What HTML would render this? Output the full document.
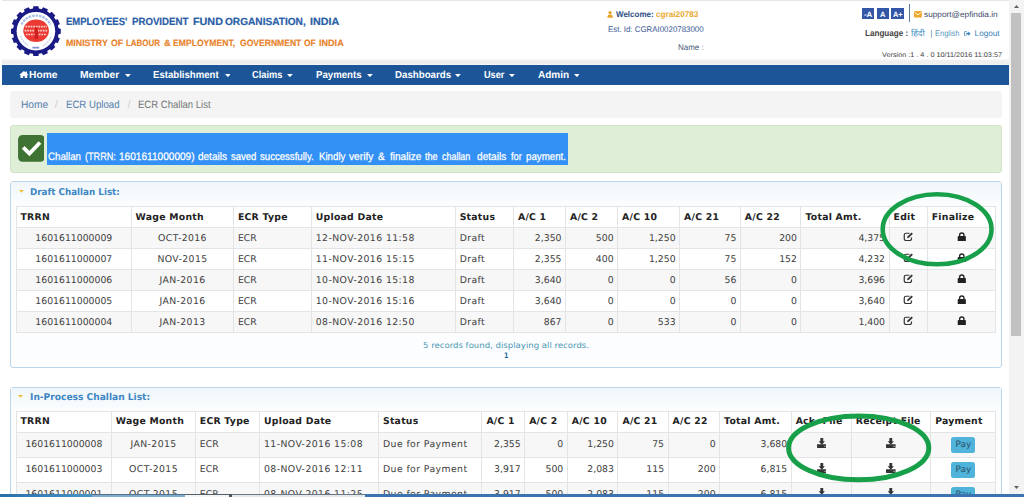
<!DOCTYPE html>
<html lang="en">
<head>
<meta charset="utf-8">
<title>ECR Challan List</title>
<style>
*{box-sizing:border-box;margin:0;padding:0}
html,body{width:1024px;height:497px;overflow:hidden;background:#fff}
body{position:relative;text-rendering:geometricPrecision;font-family:"Liberation Sans",sans-serif;font-size:11px;color:#333}
.abs{position:absolute}
.f{position:absolute;white-space:nowrap;transform-origin:0 50%;display:block;text-rendering:geometricPrecision}
.panel{left:10px;width:992px;border:1px solid #bcd5e8;border-radius:3px;background:#fcfdfe}
.phead{position:absolute;left:0;top:0;right:0;height:22px;background:linear-gradient(#eff6fb,#fbfdfe)}
.tri{width:0;height:0;border-left:2.400px solid transparent;border-right:2.400px solid transparent;border-top:2.600px solid #f0c040}
table.t{position:absolute;border-collapse:collapse;table-layout:fixed;font-family:"DejaVu Sans","Liberation Sans",sans-serif;font-size:9.3px;color:#404040;background:#fff}
table.t th,table.t td{border:1px solid #e4e4e4;padding:0 3.500px 0 4px;white-space:nowrap;overflow:hidden;vertical-align:middle;line-height:12px}
table.d th,table.d td{padding-top:2px}
table.t th{text-align:left;font-weight:bold;color:#222;letter-spacing:0.25px}
table.t td.c{text-align:center}
table.t td.r{text-align:right}
table.t td.l{text-align:left}
table.t tr.o td{background:#f7f7f7}
table.t tr.e td{background:#fff}
.ic{display:inline-block;vertical-align:middle;position:relative;top:-1px}
table.d .ic{top:-2px}
.pay{display:inline-block;background:#4fb3da;color:#2a4f66;border-radius:2.500px;font-size:8.800px;line-height:16px;width:24px;height:16px;text-align:center;vertical-align:middle;position:relative;top:-0.500px}
</style>
</head>
<body>
<div class="abs" style="left:2px;top:0;width:1008px;height:1px;background:#e6e6e6"></div>
<div class="abs" style="left:2px;top:59px;width:1008px;height:6px;background:linear-gradient(#fcfcfc,#eeeeee 30%,#eeeeee 80%,#f8f8f8)"></div>
<svg class="abs" style="left:0;top:0" width="70" height="62" viewBox="0 0 70 62">
  <path d="M58.51 28.25 L60.77 28.65 L60.77 33.75 L58.51 34.15 L57.92 37.13 L59.85 38.36 L57.90 43.07 L55.66 42.57 L53.97 45.10 L55.29 46.98 L51.68 50.59 L49.80 49.27 L47.27 50.96 L47.77 53.20 L43.06 55.15 L41.83 53.22 L38.85 53.81 L38.45 56.07 L33.35 56.07 L32.95 53.81 L29.97 53.22 L28.74 55.15 L24.03 53.20 L24.53 50.96 L22.00 49.27 L20.12 50.59 L16.51 46.98 L17.83 45.10 L16.14 42.57 L13.90 43.07 L11.95 38.36 L13.88 37.13 L13.29 34.15 L11.03 33.75 L11.03 28.65 L13.29 28.25 L13.88 25.27 L11.95 24.04 L13.90 19.33 L16.14 19.83 L17.83 17.30 L16.51 15.42 L20.12 11.81 L22.00 13.13 L24.53 11.44 L24.03 9.20 L28.74 7.25 L29.97 9.18 L32.95 8.59 L33.35 6.33 L38.45 6.33 L38.85 8.59 L41.83 9.18 L43.06 7.25 L47.77 9.20 L47.27 11.44 L49.80 13.13 L51.68 11.81 L55.29 15.42 L53.97 17.30 L55.66 19.83 L57.90 19.33 L59.85 24.04 L57.92 25.27Z" fill="#1a1a86"/>
  <circle cx="35.9" cy="31.2" r="19.3" fill="#fff"/>
  <path d="M21.4 24.5A16.2 16.2 0 0 1 50.4 24.5" fill="none" stroke="#a9bfe8" stroke-width="2.2" stroke-dasharray="2.6 0.9"/>
  <path d="M20.6 36A16.2 16.2 0 0 0 29 45.800M43 45.800A16.2 16.2 0 0 0 51.2 36" fill="none" stroke="#c5d3f0" stroke-width="1.6" stroke-dasharray="1.6 1"/>
  <ellipse cx="36.1" cy="30.8" rx="12.8" ry="11.3" fill="#ea3a33"/>
  <path d="M25.5 26.700h21.500M24.6 30.600h23M25.8 34.500h21" fill="none" stroke="#fbd3cf" stroke-width="1.700" stroke-dasharray="1.7 0.9"/>
  <path d="M34.600 29.500h3.300v9.500h-3.300z" fill="#cf1f1c"/>
  <circle cx="36.2" cy="28.600" r="1.300" fill="#cf1f1c"/>
  <rect x="32.4" y="46.800" width="6.800" height="1.700" fill="#7f8fd0"/>
</svg>
<span class="f" style="left:65.80px;top:13.00px;font:bold 10.4px/20px 'Liberation Sans',sans-serif;color:#2a5ea7;transform:scaleX(0.9115);-webkit-text-stroke:0.2px #2a5ea7;">EMPLOYEES'</span>
<span class="f" style="left:131.70px;top:13.00px;font:bold 10.4px/20px 'Liberation Sans',sans-serif;color:#2a5ea7;transform:scaleX(0.9287);-webkit-text-stroke:0.2px #2a5ea7;">PROVIDENT</span>
<span class="f" style="left:192.70px;top:13.00px;font:bold 10.4px/20px 'Liberation Sans',sans-serif;color:#2a5ea7;transform:scaleX(1.0361);-webkit-text-stroke:0.2px #2a5ea7;">FUND</span>
<span class="f" style="left:225.00px;top:13.00px;font:bold 10.4px/20px 'Liberation Sans',sans-serif;color:#2a5ea7;transform:scaleX(0.9730);-webkit-text-stroke:0.2px #2a5ea7;">ORGANISATION,</span>
<span class="f" style="left:309.50px;top:13.00px;font:bold 10.4px/20px 'Liberation Sans',sans-serif;color:#2a5ea7;transform:scaleX(1.0319);-webkit-text-stroke:0.2px #2a5ea7;">INDIA</span>
<span class="f" style="left:65.90px;top:33.00px;font:bold 9.2px/20px 'Liberation Sans',sans-serif;color:#e8822a;transform:scaleX(0.9595);-webkit-text-stroke:0.15px #e8822a;">MINISTRY</span>
<span class="f" style="left:111.20px;top:33.00px;font:bold 9.2px/20px 'Liberation Sans',sans-serif;color:#e8822a;transform:scaleX(0.9479);-webkit-text-stroke:0.15px #e8822a;">OF</span>
<span class="f" style="left:126.20px;top:33.00px;font:bold 9.2px/20px 'Liberation Sans',sans-serif;color:#e8822a;transform:scaleX(0.8649);-webkit-text-stroke:0.15px #e8822a;">LABOUR</span>
<span class="f" style="left:163.50px;top:33.00px;font:bold 9.2px/20px 'Liberation Sans',sans-serif;color:#e8822a;transform:scaleX(1.0089);-webkit-text-stroke:0.15px #e8822a;">&amp;</span>
<span class="f" style="left:173.30px;top:33.00px;font:bold 9.2px/20px 'Liberation Sans',sans-serif;color:#e8822a;transform:scaleX(0.9373);-webkit-text-stroke:0.15px #e8822a;">EMPLOYMENT,</span>
<span class="f" style="left:239.50px;top:33.00px;font:bold 9.2px/20px 'Liberation Sans',sans-serif;color:#e8822a;transform:scaleX(0.9308);-webkit-text-stroke:0.15px #e8822a;">GOVERNMENT</span>
<span class="f" style="left:304.40px;top:33.00px;font:bold 9.2px/20px 'Liberation Sans',sans-serif;color:#e8822a;transform:scaleX(0.9165);-webkit-text-stroke:0.15px #e8822a;">OF</span>
<span class="f" style="left:318.60px;top:33.00px;font:bold 9.2px/20px 'Liberation Sans',sans-serif;color:#e8822a;transform:scaleX(0.9874);-webkit-text-stroke:0.15px #e8822a;">INDIA</span>
<svg class="abs" style="left:607.3px;top:11px" width="6.2" height="6.8" viewBox="0 0 14 16"><circle cx="7" cy="4" r="3.8" fill="#e9a326"/><path d="M0.500 16c0-6 2.500-8 6.500-8s6.500 2 6.500 8z" fill="#e9a326"/></svg>
<span class="f" style="left:616.10px;top:4.00px;font:bold 8.3px/20px 'Liberation Sans',sans-serif;color:#2b4d85;transform:scaleX(0.9629);">Welcome:</span>
<span class="f" style="left:656.40px;top:4.00px;font:bold 8.3px/20px 'Liberation Sans',sans-serif;color:#e9a92b;transform:scaleX(0.9882);">cgrai20783</span>
<span class="f" style="left:608.00px;top:20.00px;font:normal 8.2px/20px 'Liberation Sans',sans-serif;color:#3c5a96;transform:scaleX(0.9634);">Est. Id: CGRAI0020783000</span>
<span class="f" style="left:677.90px;top:38.00px;font:normal 8.2px/20px 'Liberation Sans',sans-serif;color:#4a5878;transform:scaleX(0.9738);">Name :</span>
<div class="abs" style="left:862.3px;top:8.4px;width:12.1px;height:11px;background:#3456a6"></div>
<div class="abs" style="left:876.6px;top:8.4px;width:12.0px;height:11px;background:#3456a6"></div>
<div class="abs" style="left:891.0px;top:8.4px;width:12.7px;height:11px;background:#3456a6"></div>
<span class="f" style="left:864.30px;top:5.00px;font:bold 7.6px/20px 'Liberation Sans',sans-serif;color:#fff;transform:scaleX(1.0355);">-A</span>
<span class="f" style="left:880.00px;top:5.00px;font:bold 7.6px/20px 'Liberation Sans',sans-serif;color:#fff;transform:scaleX(0.9846);">A</span>
<span class="f" style="left:892.60px;top:5.00px;font:bold 7.6px/20px 'Liberation Sans',sans-serif;color:#fff;transform:scaleX(0.9676);">A+</span>
<div class="abs" style="left:909px;top:4.300px;width:1px;height:18px;background:#60789c"></div>
<svg class="abs" style="left:913.7px;top:11.400px" width="7.9" height="6.5" viewBox="0 0 18 15"><rect x="0" y="0" width="18" height="15" rx="2" fill="#f0a830"/><path d="M1.500 3l7.500 6 7.500-6" fill="none" stroke="#fff" stroke-width="2"/></svg>
<span class="f" style="left:924.30px;top:5.00px;font:normal 8px/20px 'Liberation Sans',sans-serif;color:#3a4a6a;transform:scaleX(1.0339);">support@epfindia.in</span>
<span class="f" style="left:864.80px;top:23.00px;font:bold 8.8px/20px 'Liberation Sans',sans-serif;color:#444;transform:scaleX(0.9207);">Language :</span>
<span class="f" style="left:911.30px;top:24.00px;font:normal 8.2px/20px 'Liberation Sans',sans-serif;color:#3a8ac0;transform:scaleX(1.0589);">हिंदी</span>
<span class="f" style="left:930.20px;top:24.00px;font:normal 8.2px/20px 'Liberation Sans',sans-serif;color:#5a8ab0;">|</span>
<span class="f" style="left:934.50px;top:24.00px;font:normal 8.2px/20px 'Liberation Sans',sans-serif;color:#5a9ac0;transform:scaleX(0.9122);">English</span>
<svg class="abs" style="left:964.3px;top:30.600px" width="7" height="5.400" viewBox="0 0 16 13"><path d="M6 1H2.500A1.500 1.500 0 0 0 1 2.500v8A1.500 1.500 0 0 0 2.500 12H6" fill="none" stroke="#3a80b8" stroke-width="2"/><path d="M5 4.500h5V1.500l5.500 5-5.500 5v-3H5z" fill="#3a80b8"/></svg>
<span class="f" style="left:974.60px;top:24.00px;font:normal 8.2px/20px 'Liberation Sans',sans-serif;color:#3a80b8;">Logout</span>
<span class="f" style="left:881.50px;top:46.00px;font:normal 6.8px/20px 'Liberation Sans',sans-serif;color:#444;transform:scaleX(1.0679);">Version :1 . 4 . 0 10/11/2016 11:03:57</span>
<div class="abs" style="left:2px;top:65px;width:1007px;height:20px;background:#1c5699"></div>
<svg class="abs" style="left:18.900px;top:70.600px" width="9.8" height="7.5" viewBox="0 0 20 16"><path d="M10 0L0 8.500h2.700V16h5.300v-5h4v5h5.300V8.500H20L16.500 5.500V1h-2.800v2.100z" fill="#fff"/></svg>
<span class="f" style="left:29.10px;top:66.00px;font:bold 10.2px/20px 'Liberation Sans',sans-serif;color:#fff;">Home</span>
<span class="f" style="left:80.10px;top:66.00px;font:bold 10.2px/20px 'Liberation Sans',sans-serif;color:#fff;transform:scaleX(1.0057);">Member</span>
<svg class="abs" style="left:125.0px;top:74.200px" width="5.800" height="3.200" viewBox="0 0 58 32"><path d="M0 0h58L29 32z" fill="#fff"/></svg>
<span class="f" style="left:153.10px;top:66.00px;font:bold 10.2px/20px 'Liberation Sans',sans-serif;color:#fff;transform:scaleX(0.9420);">Establishment</span>
<svg class="abs" style="left:224.5px;top:74.200px" width="5.800" height="3.200" viewBox="0 0 58 32"><path d="M0 0h58L29 32z" fill="#fff"/></svg>
<span class="f" style="left:251.90px;top:66.00px;font:bold 10.2px/20px 'Liberation Sans',sans-serif;color:#fff;transform:scaleX(0.9096);">Claims</span>
<svg class="abs" style="left:287.4px;top:74.200px" width="5.800" height="3.200" viewBox="0 0 58 32"><path d="M0 0h58L29 32z" fill="#fff"/></svg>
<span class="f" style="left:316.10px;top:66.00px;font:bold 10.2px/20px 'Liberation Sans',sans-serif;color:#fff;transform:scaleX(0.9472);">Payments</span>
<svg class="abs" style="left:366.8px;top:74.200px" width="5.800" height="3.200" viewBox="0 0 58 32"><path d="M0 0h58L29 32z" fill="#fff"/></svg>
<span class="f" style="left:394.90px;top:66.00px;font:bold 10.2px/20px 'Liberation Sans',sans-serif;color:#fff;transform:scaleX(0.9526);">Dashboards</span>
<svg class="abs" style="left:455.4px;top:74.200px" width="5.800" height="3.200" viewBox="0 0 58 32"><path d="M0 0h58L29 32z" fill="#fff"/></svg>
<span class="f" style="left:484.10px;top:66.00px;font:bold 10.2px/20px 'Liberation Sans',sans-serif;color:#fff;transform:scaleX(0.9004);">User</span>
<svg class="abs" style="left:509.2px;top:74.200px" width="5.800" height="3.200" viewBox="0 0 58 32"><path d="M0 0h58L29 32z" fill="#fff"/></svg>
<span class="f" style="left:537.90px;top:66.00px;font:bold 10.2px/20px 'Liberation Sans',sans-serif;color:#fff;transform:scaleX(0.9810);">Admin</span>
<svg class="abs" style="left:573.5px;top:74.200px" width="5.800" height="3.200" viewBox="0 0 58 32"><path d="M0 0h58L29 32z" fill="#fff"/></svg>
<div class="abs" style="left:10px;top:91px;width:992px;height:27px;background:#f4f4f4;border-radius:3px"></div>
<span class="f" style="left:21.10px;top:95.00px;font:normal 10.6px/20px 'Liberation Sans',sans-serif;color:#5580ad;transform:scaleX(0.9623);">Home</span>
<span class="f" style="left:54.80px;top:95.00px;font:normal 10.6px/20px 'Liberation Sans',sans-serif;color:#ccc;">/</span>
<span class="f" style="left:66.40px;top:95.00px;font:normal 10.6px/20px 'Liberation Sans',sans-serif;color:#5580ad;transform:scaleX(0.9085);">ECR Upload</span>
<span class="f" style="left:127.50px;top:95.00px;font:normal 10.6px/20px 'Liberation Sans',sans-serif;color:#ccc;">/</span>
<span class="f" style="left:137.80px;top:95.00px;font:normal 10.6px/20px 'Liberation Sans',sans-serif;color:#777;transform:scaleX(0.8999);">ECR Challan List</span>
<div class="abs" style="left:9.500px;top:124.800px;width:992.500px;height:48.600px;background:#dfeed7;border:1px solid #d3e4c6;border-radius:3px"></div>
<div class="abs" style="left:46.900px;top:132.600px;width:521.500px;height:32.300px;background:#3390f5"></div>
<svg class="abs" style="left:17.600px;top:135.200px" width="26.9" height="26.8" viewBox="0 0 27 27"><rect x="0" y="0" width="27" height="27" rx="4.500" fill="#3f7334"/><path d="M6.500 13.800l5 5L20.800 9" fill="none" stroke="#fff" stroke-width="3.800" stroke-linecap="square"/></svg>
<span class="f" style="left:47.90px;top:147.00px;font:normal 10.8px/20px 'Liberation Sans',sans-serif;color:#fff;transform:scaleX(0.9010);-webkit-text-stroke:0.25px #fff;">Challan</span>
<span class="f" style="left:84.80px;top:147.00px;font:normal 10.8px/20px 'Liberation Sans',sans-serif;color:#fff;transform:scaleX(0.8444);-webkit-text-stroke:0.25px #fff;">(TRRN:</span>
<span class="f" style="left:119.20px;top:147.00px;font:normal 10.8px/20px 'Liberation Sans',sans-serif;color:#fff;transform:scaleX(0.9350);-webkit-text-stroke:0.25px #fff;">1601611000009)</span>
<span class="f" style="left:198.20px;top:147.00px;font:normal 10.8px/20px 'Liberation Sans',sans-serif;color:#fff;transform:scaleX(0.9257);-webkit-text-stroke:0.25px #fff;">details</span>
<span class="f" style="left:231.00px;top:147.00px;font:normal 10.8px/20px 'Liberation Sans',sans-serif;color:#fff;transform:scaleX(0.8816);-webkit-text-stroke:0.25px #fff;">saved</span>
<span class="f" style="left:260.30px;top:147.00px;font:normal 10.8px/20px 'Liberation Sans',sans-serif;color:#fff;transform:scaleX(0.8890);-webkit-text-stroke:0.25px #fff;">successfully.</span>
<span class="f" style="left:318.90px;top:147.00px;font:normal 10.8px/20px 'Liberation Sans',sans-serif;color:#fff;transform:scaleX(0.8973);-webkit-text-stroke:0.25px #fff;">Kindly</span>
<span class="f" style="left:349.20px;top:147.00px;font:normal 10.8px/20px 'Liberation Sans',sans-serif;color:#fff;transform:scaleX(0.9459);-webkit-text-stroke:0.25px #fff;">verify</span>
<span class="f" style="left:377.70px;top:147.00px;font:normal 10.8px/20px 'Liberation Sans',sans-serif;color:#fff;transform:scaleX(0.9440);-webkit-text-stroke:0.25px #fff;">&amp;</span>
<span class="f" style="left:389.60px;top:147.00px;font:normal 10.8px/20px 'Liberation Sans',sans-serif;color:#fff;transform:scaleX(0.9313);-webkit-text-stroke:0.25px #fff;">finalize</span>
<span class="f" style="left:424.80px;top:147.00px;font:normal 10.8px/20px 'Liberation Sans',sans-serif;color:#fff;transform:scaleX(0.8458);-webkit-text-stroke:0.25px #fff;">the</span>
<span class="f" style="left:442.40px;top:147.00px;font:normal 10.8px/20px 'Liberation Sans',sans-serif;color:#fff;transform:scaleX(0.8270);-webkit-text-stroke:0.25px #fff;">challan</span>
<span class="f" style="left:476.60px;top:147.00px;font:normal 10.8px/20px 'Liberation Sans',sans-serif;color:#fff;transform:scaleX(0.9385);-webkit-text-stroke:0.25px #fff;">details</span>
<span class="f" style="left:510.70px;top:147.00px;font:normal 10.8px/20px 'Liberation Sans',sans-serif;color:#fff;transform:scaleX(0.8565);-webkit-text-stroke:0.25px #fff;">for</span>
<span class="f" style="left:526.40px;top:147.00px;font:normal 10.8px/20px 'Liberation Sans',sans-serif;color:#fff;transform:scaleX(0.9005);-webkit-text-stroke:0.25px #fff;">payment.</span>
<div class="abs panel" style="top:181px;height:187px"><div class="phead"></div></div>
<svg class="abs" style="left:18.600px;top:189.500px" width="5" height="3" viewBox="0 0 5 3"><path d="M0 0h5L2.500 2.800z" fill="#f0bf3a"/></svg>
<span class="f" style="left:29.80px;top:183.00px;font:bold 9.4px/20px 'DejaVu Sans','Liberation Sans',sans-serif;color:#3f86c4;transform:scaleX(0.9340);">Draft Challan List:</span>
<table class="t d" style="left:15.5px;top:206px;width:979.8px">
<colgroup><col style="width:115.1px"><col style="width:102.3px"><col style="width:77.9px"><col style="width:143.9px"><col style="width:58.3px"><col style="width:52.0px"><col style="width:52.1px"><col style="width:62.0px"><col style="width:60.8px"><col style="width:60.6px"><col style="width:88.1px"><col style="width:38.2px"><col style="width:68.5px"></colgroup>
<tr style="height:21px"><th>TRRN</th><th>Wage Month</th><th>ECR Type</th><th>Upload Date</th><th>Status</th><th>A/C 1</th><th>A/C 2</th><th>A/C 10</th><th>A/C 21</th><th>A/C 22</th><th>Total Amt.</th><th>Edit</th><th>Finalize</th></tr>
<tr class="o" style="height:21px"><td class="c">1601611000009</td><td class="c" style="letter-spacing:0.4px">OCT-2016</td><td class="l">ECR</td><td class="l" style="letter-spacing:0.42px">12-NOV-2016 11:58</td><td class="l" style="letter-spacing:0.4px">Draft</td><td class="r">2,350</td><td class="r">500</td><td class="r">1,250</td><td class="r">75</td><td class="r">200</td><td class="r">4,375</td><td class="c"><svg class="ic" width="10" height="9.500" viewBox="0 0 20 19"><path d="M13 2.500H6a3.500 3.500 0 0 0-3.500 3.500v7.500A3.500 3.500 0 0 0 6 17h7.500a3.500 3.500 0 0 0 3.500-3.500V11" fill="none" stroke="#333" stroke-width="2.400"/><path d="M8.200 12.500l0.800-3.700 8-8 2.800 2.800-8 8z" fill="#333"/></svg></td><td class="c"><svg class="ic" width="9.600" height="9.400" viewBox="0 0 20 19.500"><path d="M5.500 9V6.500a4.500 4.500 0 0 1 9 0V9" fill="none" stroke="#222" stroke-width="2.800"/><rect x="1.500" y="8.500" width="17" height="11" rx="1.500" fill="#222"/></svg></td></tr>
<tr class="e" style="height:21px"><td class="c">1601611000007</td><td class="c" style="letter-spacing:0.4px">NOV-2015</td><td class="l">ECR</td><td class="l" style="letter-spacing:0.42px">11-NOV-2016 15:15</td><td class="l" style="letter-spacing:0.4px">Draft</td><td class="r">2,355</td><td class="r">400</td><td class="r">1,250</td><td class="r">75</td><td class="r">152</td><td class="r">4,232</td><td class="c"><svg class="ic" width="10" height="9.500" viewBox="0 0 20 19"><path d="M13 2.500H6a3.500 3.500 0 0 0-3.500 3.500v7.500A3.500 3.500 0 0 0 6 17h7.500a3.500 3.500 0 0 0 3.500-3.500V11" fill="none" stroke="#333" stroke-width="2.400"/><path d="M8.200 12.500l0.800-3.700 8-8 2.800 2.800-8 8z" fill="#333"/></svg></td><td class="c"><svg class="ic" width="9.600" height="9.400" viewBox="0 0 20 19.500"><path d="M5.500 9V6.500a4.500 4.500 0 0 1 9 0V9" fill="none" stroke="#222" stroke-width="2.800"/><rect x="1.500" y="8.500" width="17" height="11" rx="1.500" fill="#222"/></svg></td></tr>
<tr class="o" style="height:21px"><td class="c">1601611000006</td><td class="c" style="letter-spacing:0.4px">JAN-2016</td><td class="l">ECR</td><td class="l" style="letter-spacing:0.42px">10-NOV-2016 15:18</td><td class="l" style="letter-spacing:0.4px">Draft</td><td class="r">3,640</td><td class="r">0</td><td class="r">0</td><td class="r">56</td><td class="r">0</td><td class="r">3,696</td><td class="c"><svg class="ic" width="10" height="9.500" viewBox="0 0 20 19"><path d="M13 2.500H6a3.500 3.500 0 0 0-3.500 3.500v7.500A3.500 3.500 0 0 0 6 17h7.500a3.500 3.500 0 0 0 3.500-3.500V11" fill="none" stroke="#333" stroke-width="2.400"/><path d="M8.200 12.500l0.800-3.700 8-8 2.800 2.800-8 8z" fill="#333"/></svg></td><td class="c"><svg class="ic" width="9.600" height="9.400" viewBox="0 0 20 19.500"><path d="M5.500 9V6.500a4.500 4.500 0 0 1 9 0V9" fill="none" stroke="#222" stroke-width="2.800"/><rect x="1.500" y="8.500" width="17" height="11" rx="1.500" fill="#222"/></svg></td></tr>
<tr class="e" style="height:21px"><td class="c">1601611000005</td><td class="c" style="letter-spacing:0.4px">JAN-2016</td><td class="l">ECR</td><td class="l" style="letter-spacing:0.42px">10-NOV-2016 15:16</td><td class="l" style="letter-spacing:0.4px">Draft</td><td class="r">3,640</td><td class="r">0</td><td class="r">0</td><td class="r">0</td><td class="r">0</td><td class="r">3,640</td><td class="c"><svg class="ic" width="10" height="9.500" viewBox="0 0 20 19"><path d="M13 2.500H6a3.500 3.500 0 0 0-3.500 3.500v7.500A3.500 3.500 0 0 0 6 17h7.500a3.500 3.500 0 0 0 3.500-3.500V11" fill="none" stroke="#333" stroke-width="2.400"/><path d="M8.200 12.500l0.800-3.700 8-8 2.800 2.800-8 8z" fill="#333"/></svg></td><td class="c"><svg class="ic" width="9.600" height="9.400" viewBox="0 0 20 19.500"><path d="M5.500 9V6.500a4.500 4.500 0 0 1 9 0V9" fill="none" stroke="#222" stroke-width="2.800"/><rect x="1.500" y="8.500" width="17" height="11" rx="1.500" fill="#222"/></svg></td></tr>
<tr class="o" style="height:21px"><td class="c">1601611000004</td><td class="c" style="letter-spacing:0.4px">JAN-2013</td><td class="l">ECR</td><td class="l" style="letter-spacing:0.42px">08-NOV-2016 12:50</td><td class="l" style="letter-spacing:0.4px">Draft</td><td class="r">867</td><td class="r">0</td><td class="r">533</td><td class="r">0</td><td class="r">0</td><td class="r">1,400</td><td class="c"><svg class="ic" width="10" height="9.500" viewBox="0 0 20 19"><path d="M13 2.500H6a3.500 3.500 0 0 0-3.500 3.500v7.500A3.500 3.500 0 0 0 6 17h7.500a3.500 3.500 0 0 0 3.500-3.500V11" fill="none" stroke="#333" stroke-width="2.400"/><path d="M8.200 12.500l0.800-3.700 8-8 2.800 2.800-8 8z" fill="#333"/></svg></td><td class="c"><svg class="ic" width="9.600" height="9.400" viewBox="0 0 20 19.500"><path d="M5.500 9V6.500a4.500 4.500 0 0 1 9 0V9" fill="none" stroke="#222" stroke-width="2.800"/><rect x="1.500" y="8.500" width="17" height="11" rx="1.500" fill="#222"/></svg></td></tr>
</table>
<span class="f" style="left:422.60px;top:336.00px;font:normal 8px/20px 'DejaVu Sans','Liberation Sans',sans-serif;color:#4a98b5;transform:scaleX(1.0683);">5 records found, displaying all records.</span>
<span class="f" style="left:503.80px;top:346.00px;font:bold 7.6px/20px 'DejaVu Sans','Liberation Sans',sans-serif;color:#2a6a9a;transform:scaleX(0.8307);">1</span>
<div class="abs panel" style="top:387px;height:130px"><div class="phead"></div></div>
<svg class="abs" style="left:18.200px;top:395.200px" width="5" height="3" viewBox="0 0 5 3"><path d="M0 0h5L2.500 2.800z" fill="#f0bf3a"/></svg>
<span class="f" style="left:30.10px;top:388.00px;font:bold 9.4px/20px 'DejaVu Sans','Liberation Sans',sans-serif;color:#3f86c4;transform:scaleX(0.9693);">In-Process Challan List:</span>
<table class="t p" style="left:15.5px;top:411px;width:979.6px">
<colgroup><col style="width:95.3px"><col style="width:84.0px"><col style="width:64.2px"><col style="width:119.0px"><col style="width:103.4px"><col style="width:42.8px"><col style="width:42.6px"><col style="width:50.7px"><col style="width:50.1px"><col style="width:51.5px"><col style="width:71.6px"><col style="width:60.2px"><col style="width:79.4px"><col style="width:64.8px"></colgroup>
<tr style="height:21px"><th>TRRN</th><th>Wage Month</th><th>ECR Type</th><th>Upload Date</th><th>Status</th><th>A/C 1</th><th>A/C 2</th><th>A/C 10</th><th>A/C 21</th><th>A/C 22</th><th>Total Amt.</th><th>Ack. File</th><th>Receipt File</th><th>Payment</th></tr>
<tr class="o" style="height:25px"><td class="c">1601611000008</td><td class="c" style="letter-spacing:0.4px">JAN-2015</td><td class="l">ECR</td><td class="l" style="letter-spacing:0.42px">11-NOV-2016 15:08</td><td class="l" style="letter-spacing:0.42px">Due for Payment</td><td class="r">2,355</td><td class="r">0</td><td class="r">1,250</td><td class="r">75</td><td class="r">0</td><td class="r">3,680</td><td class="c"><svg class="ic" width="9.600" height="10" viewBox="0 0 20 21"><path d="M7 0h6v7h3.500L10 14 3.500 7H7z" fill="#333"/><path d="M0 13h20v7a1 1 0 0 1-1 1H1a1 1 0 0 1-1-1z" fill="#333"/><rect x="14.500" y="16.500" width="1.800" height="1.800" fill="#bbb"/><rect x="17" y="16.500" width="1.800" height="1.800" fill="#bbb"/></svg></td><td class="c"><svg class="ic" width="9.600" height="10" viewBox="0 0 20 21"><path d="M7 0h6v7h3.500L10 14 3.500 7H7z" fill="#333"/><path d="M0 13h20v7a1 1 0 0 1-1 1H1a1 1 0 0 1-1-1z" fill="#333"/><rect x="14.500" y="16.500" width="1.800" height="1.800" fill="#bbb"/><rect x="17" y="16.500" width="1.800" height="1.800" fill="#bbb"/></svg></td><td class="c"><span class="pay">Pay</span></td></tr>
<tr class="e" style="height:25px"><td class="c">1601611000003</td><td class="c" style="letter-spacing:0.4px">OCT-2015</td><td class="l">ECR</td><td class="l" style="letter-spacing:0.42px">08-NOV-2016 12:11</td><td class="l" style="letter-spacing:0.42px">Due for Payment</td><td class="r">3,917</td><td class="r">500</td><td class="r">2,083</td><td class="r">115</td><td class="r">200</td><td class="r">6,815</td><td class="c"><svg class="ic" width="9.600" height="10" viewBox="0 0 20 21"><path d="M7 0h6v7h3.500L10 14 3.500 7H7z" fill="#333"/><path d="M0 13h20v7a1 1 0 0 1-1 1H1a1 1 0 0 1-1-1z" fill="#333"/><rect x="14.500" y="16.500" width="1.800" height="1.800" fill="#bbb"/><rect x="17" y="16.500" width="1.800" height="1.800" fill="#bbb"/></svg></td><td class="c"><svg class="ic" width="9.600" height="10" viewBox="0 0 20 21"><path d="M7 0h6v7h3.500L10 14 3.500 7H7z" fill="#333"/><path d="M0 13h20v7a1 1 0 0 1-1 1H1a1 1 0 0 1-1-1z" fill="#333"/><rect x="14.500" y="16.500" width="1.800" height="1.800" fill="#bbb"/><rect x="17" y="16.500" width="1.800" height="1.800" fill="#bbb"/></svg></td><td class="c"><span class="pay">Pay</span></td></tr>
<tr class="o" style="height:25px"><td class="c">1601611000001</td><td class="c" style="letter-spacing:0.4px">OCT-2015</td><td class="l">ECR</td><td class="l" style="letter-spacing:0.42px">08-NOV-2016 11:25</td><td class="l" style="letter-spacing:0.42px">Due for Payment</td><td class="r">3,917</td><td class="r">500</td><td class="r">2,083</td><td class="r">115</td><td class="r">200</td><td class="r">6,815</td><td class="c"><svg class="ic" width="9.600" height="10" viewBox="0 0 20 21"><path d="M7 0h6v7h3.500L10 14 3.500 7H7z" fill="#333"/><path d="M0 13h20v7a1 1 0 0 1-1 1H1a1 1 0 0 1-1-1z" fill="#333"/><rect x="14.500" y="16.500" width="1.800" height="1.800" fill="#bbb"/><rect x="17" y="16.500" width="1.800" height="1.800" fill="#bbb"/></svg></td><td class="c"><svg class="ic" width="9.600" height="10" viewBox="0 0 20 21"><path d="M7 0h6v7h3.500L10 14 3.500 7H7z" fill="#333"/><path d="M0 13h20v7a1 1 0 0 1-1 1H1a1 1 0 0 1-1-1z" fill="#333"/><rect x="14.500" y="16.500" width="1.800" height="1.800" fill="#bbb"/><rect x="17" y="16.500" width="1.800" height="1.800" fill="#bbb"/></svg></td><td class="c"><span class="pay">Pay</span></td></tr>
</table>
<svg class="abs" style="left:0;top:0" width="1024" height="497" viewBox="0 0 1024 497">
  <ellipse cx="937.1" cy="229.300" rx="54.400" ry="35" fill="none" stroke="#17a049" stroke-width="4.600"/>
  <ellipse cx="858.7" cy="447.900" rx="70.100" ry="31.900" fill="none" stroke="#17a049" stroke-width="5"/>
</svg>
<div class="abs" style="left:1009px;top:0;width:15px;height:494px;background:#f3f3f3"></div>
<div class="abs" style="left:1011px;top:13px;width:10px;height:323px;background:#c1c1c1"></div>
<svg class="abs" style="left:1013.800px;top:5.200px" width="5" height="3" viewBox="0 0 5 3"><path d="M0 3h5L2.500 0z" fill="#606060"/></svg>
<svg class="abs" style="left:1013.800px;top:486px" width="5" height="3" viewBox="0 0 5 3"><path d="M0 0h5L2.500 3z" fill="#606060"/></svg>
<div class="abs" style="left:0;top:494px;width:1024px;height:3px;background:#3c74b0"></div>
<div class="abs" style="left:0;top:494px;width:92px;height:3px;background:linear-gradient(90deg,#2a6ea8,#4a94c4)"></div>
<div class="abs" style="left:92px;top:494px;width:93px;height:3px;background:#7caccf;border-top:1px solid #56708a"></div>
<div class="abs" style="left:185px;top:494px;width:44px;height:3px;background:#f3f5f7;border-top:1px solid #56606a"></div>
<div class="abs" style="left:229px;top:494px;width:3px;height:3px;background:#4a5560"></div>
<div class="abs" style="left:232px;top:494px;width:133px;height:3px;background:#e4e8ec;border-top:1px solid #6a7884"></div>
</body>
</html>
